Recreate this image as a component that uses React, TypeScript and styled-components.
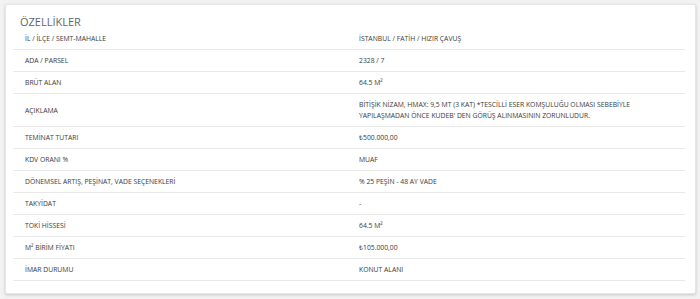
import React from "react";
import styled, { createGlobalStyle } from "styled-components";

const GlobalStyle = createGlobalStyle`
  html, body {
    margin: 0;
    padding: 0;
    background: #f2f2f2;
  }
  body {
    font-family: "Open Sans", "Liberation Sans", sans-serif;
  }
`;

const Page = styled.div`
  padding: 4px 4px 6px 5px;
`;

const Card = styled.div`
  background: #fff;
  border: 1px solid #e6e6e6;
  border-radius: 2px;
  box-shadow: 0 1px 3px rgba(0, 0, 0, 0.18);
  padding: 10px 10px 12px 7px;
`;

const Title = styled.h4`
  margin: 0 0 0 7px;
  font-size: 11px;
  font-weight: 400;
  line-height: 13px;
  color: #5d6670;
`;

const Table = styled.div`
  display: flex;
  flex-direction: column;
`;

const Row = styled.div<{ $first?: boolean }>`
  display: grid;
  grid-template-columns: 50% 50%;
  align-items: center;
  border-top: ${(p) => (p.$first ? "none" : "1px solid #e9e9e9")};
  &:last-child {
    border-bottom: 1px solid #e9e9e9;
  }
`;

const Cell = styled.div<{ $value?: boolean }>`
  padding: 5px 12px 5px ${(p) => (p.$value ? "10px" : "12px")};
  font-size: 6.8px;
  line-height: 11px;
  color: #3a3a3a;
  text-transform: uppercase;
`;

const rows: Array<[string, string]> = [
  ["İL / İLÇE / SEMT-MAHALLE", "İSTANBUL / FATİH / HIZIR ÇAVUŞ"],
  ["ADA / PARSEL", "2328 / 7"],
  ["BRÜT ALAN", "64.5 M²"],
  [
    "AÇIKLAMA",
    "BİTİŞİK NİZAM, HMAX: 9,5 MT (3 KAT) *TESCİLLİ ESER KOMŞULUĞU OLMASI SEBEBİYLE YAPILAŞMADAN ÖNCE KUDEB' DEN GÖRÜŞ ALINMASININ ZORUNLUDUR.",
  ],
  ["TEMİNAT TUTARI", "₺500.000,00"],
  ["KDV ORANI %", "MUAF"],
  ["DÖNEMSEL ARTIŞ, PEŞİNAT, VADE SEÇENEKLERİ", "% 25 PEŞİN - 48 AY VADE"],
  ["TAKYİDAT", "-"],
  ["TOKİ HİSSESİ", "64.5 M²"],
  ["M² BİRİM FİYATI", "₺105.000,00"],
  ["İMAR DURUMU", "KONUT ALANI"],
];

const App: React.FC = () => {
  return (
    <Page>
      <GlobalStyle />
      <Card>
        <Title>ÖZELLİKLER</Title>
        <Table>
          {rows.map(([label, value], index) => (
            <Row key={index} $first={index === 0}>
              <Cell>{label}</Cell>
              <Cell $value>{value}</Cell>
            </Row>
          ))}
        </Table>
      </Card>
    </Page>
  );
};

export default App;
